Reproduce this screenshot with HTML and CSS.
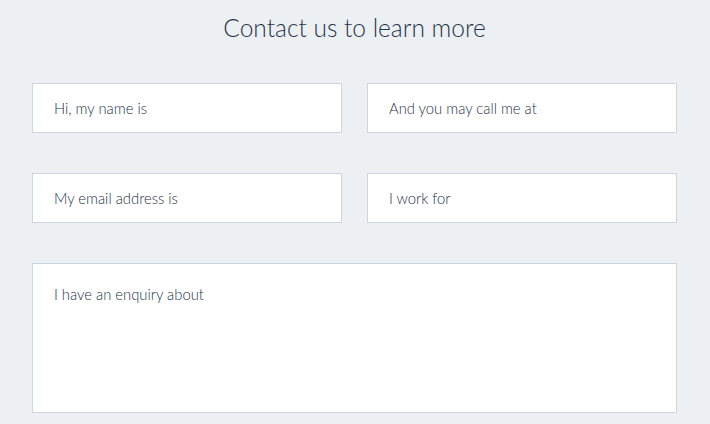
FILE: index.html
```html
<!DOCTYPE html>
<html lang="en">
<head>
<meta charset="utf-8">
<title>Contact us</title>
<link rel="stylesheet" href="styles.css">
</head>
<body>
<main class="contact">
  <h1 class="contact-title">Contact us to learn more</h1>
  <form class="contact-form">
    <input class="field" type="text" placeholder="Hi, my name is">
    <input class="field" type="text" placeholder="And you may call me at">
    <input class="field" type="email" placeholder="My email address is">
    <input class="field" type="text" placeholder="I work for">
    <textarea class="field field-area" placeholder="I have an enquiry about"></textarea>
  </form>
</main>
</body>
</html>
```
FILE: styles.css
```css
html, body {
  margin: 0;
  padding: 0;
  background: #edf0f3;
}
body {
  font-family: Lato, "Open Sans", sans-serif;
  color: #2b3b4c;
}
.contact {
  padding: 0 33px 0 32px;
}
.contact-title {
  margin: 0;
  padding-top: 12px;
  height: 83px;
  box-sizing: border-box;
  text-align: center;
  font-weight: 300;
  font-size: 24.5px;
  line-height: 32px;
  color: #1f344a;
}
.contact-form {
  display: grid;
  grid-template-columns: 1fr 1fr;
  column-gap: 25px;
  row-gap: 40px;
}
.field {
  box-sizing: border-box;
  height: 50px;
  margin: 0;
  border: 1px solid #cdd6dd;
  background: #fff;
  padding: 0 20px 0 21px;
  font-family: Lato, "Open Sans", sans-serif;
  font-weight: 300;
  font-size: 14.8px;
  color: #1e3246;
  outline: none;
  border-radius: 0;
}
.field::placeholder {
  color: #1e3246;
  opacity: 1;
}
.field-area {
  grid-column: 1 / 3;
  height: 150px;
  padding-top: 19px;
  resize: none;
  line-height: 22px;
}
```
